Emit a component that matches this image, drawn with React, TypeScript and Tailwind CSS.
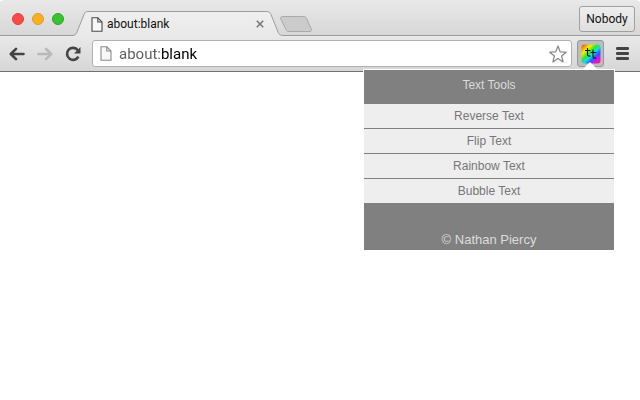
import { ReactNode } from 'react'

const TOOLS = ['Reverse Text', 'Flip Text', 'Rainbow Text', 'Bubble Text']

const LIGHTS = [
  { label: 'Close window', style: 'bg-[#fc4948] border-[#df3d3b]' },
  { label: 'Minimize window', style: 'bg-[#fdb01e] border-[#dd9a2c]' },
  { label: 'Zoom window', style: 'bg-[#38c32f] border-[#2ca629]' },
]

function PageIcon({ className }: { className: string }) {
  return (
    <svg viewBox="0 0 12 15" className={className} aria-hidden="true">
      <path d="M1 .8h5.8L11 5v9.2H1z" fill="#f7f7f7" stroke="currentColor" strokeWidth="1.1" />
      <path d="M6.8.8V5H11" fill="none" stroke="currentColor" strokeWidth="1.1" />
    </svg>
  )
}

function NavButton({ label, children }: { label: string; children: ReactNode }) {
  return (
    <button aria-label={label} className="flex h-7 w-7 items-center justify-center">
      {children}
    </button>
  )
}

function Tab() {
  return (
    <div className="relative w-[212px]">
      <svg viewBox="0 0 212 36" className="absolute inset-0 h-9 w-full" aria-hidden="true">
        <defs>
          <linearGradient id="tab" x1="0" y1="0" x2="0" y2="1">
            <stop offset="0" stopColor="#efefef" />
            <stop offset="1" stopColor="#e9e9e9" />
          </linearGradient>
        </defs>
        <path
          d="M0 36V35.5C3 35.5 4 34.5 5 32L12 14.5C13 12.3 14 11.5 16 11.5H194.5C197 11.5 198 12.5 199 14.5L206 32C207 34.5 208 35.5 211 35.5V36Z"
          fill="url(#tab)"
        />
        <path
          d="M0 35.5C3 35.5 4 34.5 5 32L12 14.5C13 12.3 14 11.5 16 11.5H194.5C197 11.5 198 12.5 199 14.5L206 32C207 34.5 208 35.5 212 35.5"
          fill="none"
          stroke="#9c9c9c"
        />
      </svg>
      <div className="relative flex h-9 items-center gap-1 pt-3 pr-[18px] pl-[19px]">
        <PageIcon className="h-[15px] w-3 text-[#4a4a4a]" />
        <span className="flex-1 text-xs text-[#111]">about:blank</span>
        <button aria-label="Close tab" className="flex h-3 w-3 items-center justify-center">
          <svg viewBox="0 0 8 8" className="h-2 w-2" stroke="#777" strokeWidth="1.6" aria-hidden="true">
            <path d="M.8.8l6.4 6.4M7.2.8L.8 7.2" />
          </svg>
        </button>
      </div>
    </div>
  )
}

function TabStrip() {
  return (
    <div className="flex h-9 bg-[linear-gradient(#e9e9e9,#d7d7d7)] shadow-[inset_0_-1px_0_#9c9c9c]">
      <div className="flex w-[72px] gap-2 pt-[13px] pl-3">
        {LIGHTS.map(light => (
          <button key={light.label} aria-label={light.label} className={`h-3 w-3 rounded-full border ${light.style}`} />
        ))}
      </div>
      <Tab />
      <button aria-label="New tab" className="-ml-1 h-8 w-8 pt-4">
        <svg viewBox="0 0 32 16" className="h-4 w-8" aria-hidden="true">
          <path
            d="M2.5.5H23.5C25 .5 26 1 26.6 2.5L31.3 13C31.8 14.5 31.3 15.5 30 15.5H9C7.5 15.5 6.5 15 6 13.5L.8 3C.2 1.5 1 .5 2.5.5Z"
            fill="#cbcbcb"
            stroke="#a9a9a9"
          />
        </svg>
      </button>
      <div className="ml-auto pt-[6px] pr-[5px]">
        <button className="h-[26px] w-14 rounded-[3px] border border-[#a0a0a0] bg-[linear-gradient(#eeeeee,#dfdfdf)] text-xs text-[#111]">
          Nobody
        </button>
      </div>
    </div>
  )
}

function Popup() {
  return (
    <div className="absolute top-[29px] -right-[11px] w-[252px] border border-b-0 border-white bg-[#808080] text-center font-['Liberation_Sans',Arial,sans-serif]">
      {/* arrow pointing at the extension button */}
      <svg viewBox="0 0 16 8" className="absolute -top-2 right-4 h-2 w-4" aria-hidden="true">
        <path d="M0 8L8 0l8 8z" fill="#fff" />
      </svg>
      <h1 className="h-[34px] text-xs leading-[30px] text-[#dcdcdc]">Text Tools</h1>
      <ul className="divide-y divide-[#808080] bg-[#eee] text-xs text-[#777]">
        {TOOLS.map(tool => (
          <li key={tool}>
            <button className="block h-6 w-full leading-6">{tool}</button>
          </li>
        ))}
      </ul>
      <footer className="pt-[26px] text-[13px] leading-[21px] text-[#dcdcdc]">© Nathan Piercy</footer>
    </div>
  )
}

function ExtensionButton() {
  return (
    <div className="relative">
      <button
        aria-label="Text Tools"
        className="flex h-[27px] w-[27px] items-center justify-center rounded-[3px] border border-[#979797] bg-[#bdbdbd]"
      >
        <svg viewBox="0 0 20 20" className="h-5 w-5" aria-hidden="true">
          <defs>
            <linearGradient id="rainbow" x1="0" y1="0" x2="1" y2="1">
              <stop offset="0" stopColor="#ff2a12" />
              <stop offset=".14" stopColor="#ff9a00" />
              <stop offset=".26" stopColor="#f4f000" />
              <stop offset=".42" stopColor="#35e52a" />
              <stop offset=".55" stopColor="#10dfe8" />
              <stop offset=".68" stopColor="#2a5cff" />
              <stop offset=".8" stopColor="#c818f5" />
              <stop offset=".92" stopColor="#ff1290" />
              <stop offset="1" stopColor="#ff2020" />
            </linearGradient>
          </defs>
          <rect x=".5" y=".5" width="19" height="19" rx="3" fill="url(#rainbow)" />
          <g fill="none" stroke="#111" strokeWidth="1.1">
            <path d="M6.5 4v6.5q0 1.6 1.6 1.6h1.3M4 6.5h5.3" />
            <path d="M12 5.8v6.7q0 1.6 1.6 1.6h1.6M9.6 8.5h5.6" />
          </g>
        </svg>
      </button>
      <Popup />
    </div>
  )
}

function Toolbar() {
  return (
    <div className="flex h-9 items-center gap-[5px] border-b border-[#6f6f6f] bg-[linear-gradient(#e9e9e9,#d6d6d6)] pr-1 pl-[3px]">
      <div className="flex">
        <NavButton label="Back">
          <svg viewBox="0 0 16 14" className="h-[14px] w-4" fill="none" stroke="#444" strokeWidth="2.6" strokeLinecap="round" strokeLinejoin="round" aria-hidden="true">
            <path d="M7 1.8L1.8 7 7 12.2M2.5 7h12" />
          </svg>
        </NavButton>
        <NavButton label="Forward">
          <svg viewBox="0 0 16 14" className="h-[14px] w-4" fill="none" stroke="#b9b9b9" strokeWidth="2.6" strokeLinecap="round" strokeLinejoin="round" aria-hidden="true">
            <path d="M9 1.8L14.2 7 9 12.2M13.5 7h-12" />
          </svg>
        </NavButton>
        <NavButton label="Reload">
          <svg viewBox="0 0 16 16" className="h-4 w-4" aria-hidden="true">
            <path d="M12.8 4.2A6 6 0 1 0 13.4 10.6" fill="none" stroke="#444" strokeWidth="2.6" />
            <path d="M15.5 1v6.5H9z" fill="#444" />
          </svg>
        </NavButton>
      </div>
      <div className="flex h-[27px] flex-1 items-center gap-[7px] rounded-[3px] border border-[#b0b0b0] bg-white pr-1 pl-[7px]">
        <PageIcon className="h-[15px] w-3 text-[#8a8a8a]" />
        {/* scheme is dimmed, the rest of the address is black */}
        <input
          aria-label="Address"
          defaultValue="about:blank"
          className="h-5 min-w-0 flex-1 bg-[linear-gradient(90deg,#5c5c5c_43px,#000_43px)] bg-clip-text text-[15px] leading-5 text-transparent caret-black outline-none"
        />
        <button aria-label="Bookmark this page">
          <svg viewBox="0 0 18 18" className="h-[18px] w-[18px]" aria-hidden="true">
            <path
              d="M9 1l2.2 5.8 6 .4-4.6 3.8 1.5 5.9L9 13.6l-5.1 3.3 1.5-5.9L.8 7.2l6-.4z"
              fill="#fff"
              stroke="#858585"
              strokeWidth="1.2"
              strokeLinejoin="round"
            />
          </svg>
        </button>
      </div>
      <ExtensionButton />
      <button aria-label="Menu" className="flex h-[27px] w-[27px] items-center justify-center">
        <svg viewBox="0 0 13 13" className="h-[13px] w-[13px]" fill="#444" aria-hidden="true">
          <rect width="13" height="3" rx="1.2" />
          <rect y="5" width="13" height="3" rx="1.2" />
          <rect y="10" width="13" height="3" rx="1.2" />
        </svg>
      </button>
    </div>
  )
}

export default function App() {
  return (
    <div className="min-h-screen bg-white font-[Roboto,sans-serif]">
      <header className="[&>:first-child]:rounded-t-[4px]">
        <TabStrip />
        <Toolbar />
      </header>
      <main />
    </div>
  )
}
